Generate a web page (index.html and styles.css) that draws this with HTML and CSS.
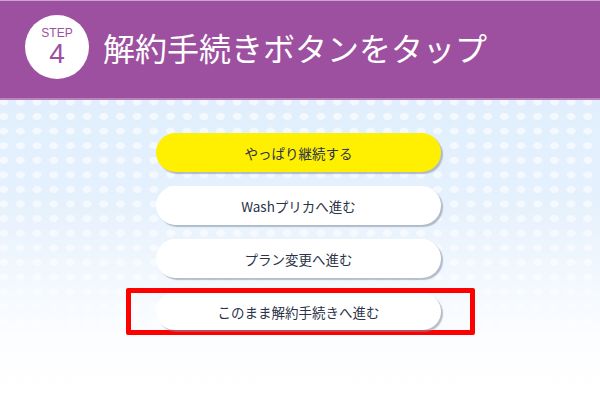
FILE: index.html
```html
<!DOCTYPE html>
<html lang="ja">
<head>
  <meta charset="UTF-8" />
  <meta name="viewport" content="width=device-width, initial-scale=1" />
  <title>STEP 4 - 解約手続きボタンをタップ</title>
  <link rel="stylesheet" href="styles.css">
</head>
<body>
  <header class="step-header">
    <div class="step-badge">
      <span class="step-label">STEP</span>
      <span class="step-num">4</span>
    </div>
    <h1 class="step-title">解約手続きボタンをタップ</h1>
  </header>

  <main class="choices">
    <button class="choice choice-yellow">やっぱり継続する</button>
    <button class="choice">Washプリカへ進む</button>
    <button class="choice">プラン変更へ進む</button>
    <div class="highlight">
      <button class="choice choice-small">このまま解約手続きへ進む</button>
    </div>
  </main>
</body>
</html>
```

FILE: styles.css
```css
html, body {
  margin: 0;
  height: 100%;
}
body {
  font-family: "Noto Sans CJK JP", "Noto Sans", sans-serif;
  background-color: #ffffff;
  background-image:
    linear-gradient(to bottom, rgba(255,255,255,0) 50%, rgba(255,255,255,0.6) 80%, #ffffff 100%),
    radial-gradient(ellipse 4.6px 3.6px at 50% 50%, #f4f9ff 90%, rgba(244,249,255,0) 100%),
    linear-gradient(to bottom, #dcecfd 0%, #e8f2fd 65%, #fbfdff 100%);
  background-size: 100% 100%, 16.7px 14.6px, 100% 100%;
  background-position: 0 0, 12px 7px, 0 0;
  overflow: hidden;
}
.step-header {
  height: 97px;
  background: #9d50a0;
  border-top: 1px solid #c9a3cc;
  border-bottom: 2px solid #b985bb;
  display: flex;
  align-items: center;
  padding-left: 25px;
}
.step-badge {
  width: 64px;
  height: 64px;
  border-radius: 50%;
  background: #ffffff;
  color: #9d50a0;
  font-family: "Liberation Sans", Arial, sans-serif;
  display: flex;
  flex-direction: column;
  align-items: center;
  justify-content: center;
  margin-top: -6px;
}
.step-label {
  font-size: 12px;
  line-height: 14px;
}
.step-num {
  font-size: 28px;
  line-height: 28px;
}
.step-title {
  margin: -6px 0 0 14px;
  color: #ffffff;
  font-size: 32px;
  font-weight: normal;
}
.choices {
  display: flex;
  flex-direction: column;
  align-items: flex-start;
  gap: 14px;
  padding-top: 33px;
  padding-left: 156px;
}
.choice {
  width: 285px;
  height: 39px;
  border: none;
  border-radius: 20px;
  background: #ffffff;
  color: #2b3447;
  font-family: "Noto Sans CJK JP", "Noto Sans", sans-serif;
  font-size: 13.5px;
  box-shadow: 2px 2px 1px rgba(130, 140, 160, 0.55);
  cursor: pointer;
  padding: 0;
}
.choice-yellow {
  background: #ffef00;
}
.choice-small {
  height: 37px;
}
.highlight {
  border: 5px solid #ff0000;
  border-radius: 2px;
  padding: 0 29px 0 25px;
  margin: -4px 0 0 -30px;
  display: flex;
}
```
